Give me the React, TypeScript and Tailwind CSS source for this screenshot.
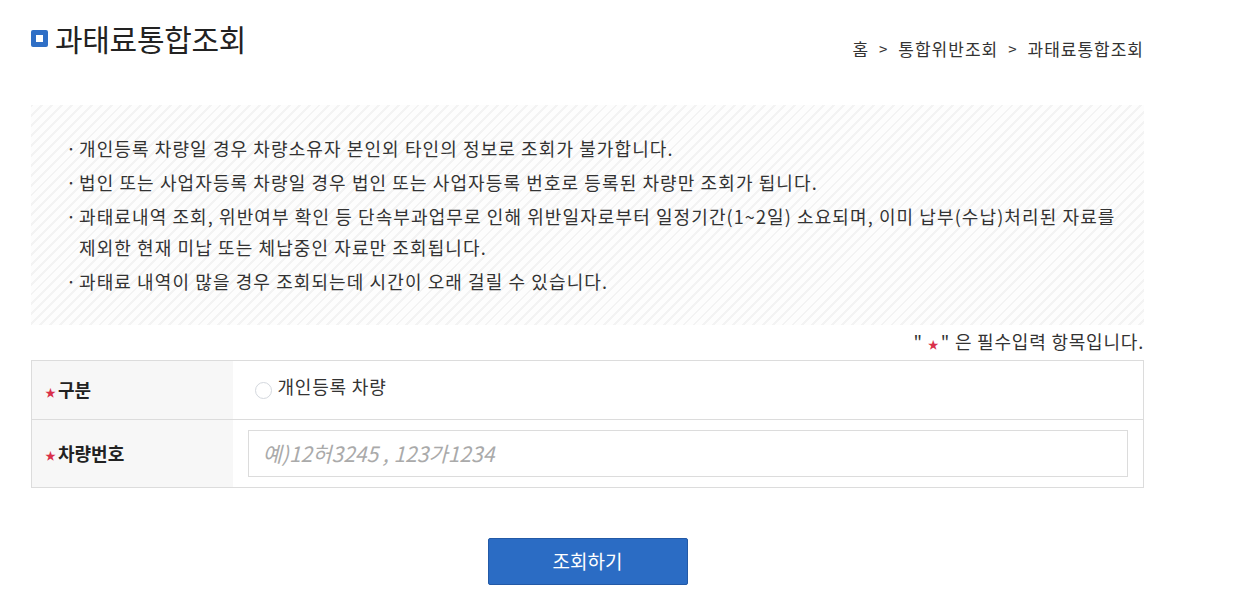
import { useState } from "react";

const notices = [
  "개인등록 차량일 경우 차량소유자 본인외 타인의 정보로 조회가 불가합니다.",
  "법인 또는 사업자등록 차량일 경우 법인 또는 사업자등록 번호로 등록된 차량만 조회가 됩니다.",
  "과태료내역 조회, 위반여부 확인 등 단속부과업무로 인해 위반일자로부터 일정기간(1~2일) 소요되며, 이미 납부(수납)처리된 자료를 제외한 현재 미납 또는 체납중인 자료만 조회됩니다.",
  "과태료 내역이 많을 경우 조회되는데 시간이 오래 걸릴 수 있습니다.",
];

function Star() {
  return <span className="text-[#d9304a] text-[11px] mr-[2px] align-middle tracking-normal">★</span>;
}

export default function App() {
  const [carNo, setCarNo] = useState("");
  const [kind, setKind] = useState(false);

  return (
    <div
      className="min-h-screen bg-white text-[#222]"
      style={{ fontFamily: '"Noto Sans CJK KR", "Noto Sans", sans-serif' }}
    >
      <div className="w-[1113px] ml-[31px]">
        <div className="flex items-start justify-between pt-[16px]">
          <h1 className="flex items-center text-[30px] leading-[44px] font-normal tracking-[-0.3px] text-[#222]">
            <span className="w-[17px] h-[17px] rounded-[2px] bg-[#2f6fc6] flex items-center justify-center mr-[7px]">
              <span className="w-[7px] h-[7px] bg-white" />
            </span>
            과태료통합조회
          </h1>
          <div className="mt-[20px] text-[17px] tracking-[1px] text-[#333] flex items-center gap-[10px]">
            <span>홈</span>
            <span className="text-[15px]">&gt;</span>
            <span>통합위반조회</span>
            <span className="text-[15px]">&gt;</span>
            <span>과태료통합조회</span>
          </div>
        </div>

        <div className="mt-[43px] h-[220px] bg-[repeating-linear-gradient(135deg,#f3f3f3_0px,#f3f3f3_2px,#fdfdfd_2px,#fdfdfd_7px)] pl-[35px] pr-[16px] pt-[28px]">
          <ul className="text-[18px] leading-[31px] tracking-[1.1px] text-[#333] break-keep">
            {notices.map((t, i) => (
              <li key={i} className="relative pl-[13px] mb-[3px]">
                <span className="absolute left-0 top-0">·</span>
                {t}
              </li>
            ))}
          </ul>
        </div>

        <p className="text-right text-[18px] tracking-[0.8px] text-[#333] mt-[3px] leading-[26px]">
          " <Star />" 은 필수입력 항목입니다.
        </p>

        <table className="w-full mt-[3px] border-collapse border border-[#dcdcdc]">
          <tbody>
            <tr className="h-[59px] border-b border-[#dcdcdc]">
              <th className="w-[201px] bg-[#f7f7f7] text-left pl-[13px] text-[18px] font-bold text-[#222]">
                <Star />구분
              </th>
              <td className="pl-[22px]">
                <label className="flex items-center gap-[6px] text-[18px] tracking-[0.8px] text-[#333] -mt-[6px] cursor-pointer">
                  <span
                    onClick={() => setKind(!kind)}
                    className="w-[17px] h-[17px] rounded-full border border-[#d4d8de] bg-white mt-[8px]"
                  />
                  개인등록 차량
                </label>
              </td>
            </tr>
            <tr className="h-[68px]">
              <th className="bg-[#f7f7f7] text-left pl-[13px] text-[18px] font-bold text-[#222]">
                <Star />차량번호
              </th>
              <td className="pl-[15px] pr-[15px]">
                <input
                  value={carNo}
                  onChange={(e) => setCarNo(e.target.value)}
                  placeholder="예)12허3245 , 123가1234"
                  className="w-full h-[47px] border border-[#dcdcdc] px-[14px] text-[21px] italic placeholder-[#aaa] outline-none"
                />
              </td>
            </tr>
          </tbody>
        </table>

        <div className="flex justify-center mt-[50px]">
          <button className="w-[200px] h-[47px] bg-[#2b6cc4] border border-[#2359a6] rounded-[2px] text-white text-[19px]">
            조회하기
          </button>
        </div>
      </div>
    </div>
  );
}
